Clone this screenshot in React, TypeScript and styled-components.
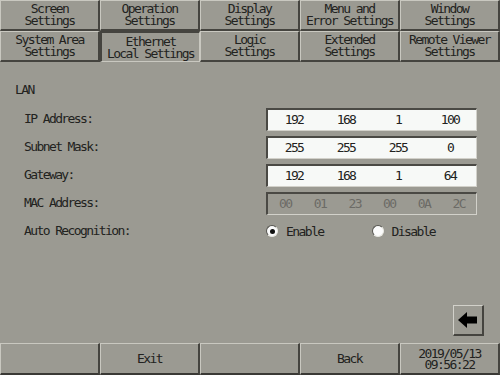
import React from "react";
import { createGlobalStyle, styled } from "styled-components";

const GlobalStyle = createGlobalStyle`
  html, body {
    margin: 0;
    padding: 0;
    background: #9b9a92;
  }
  body {
    font-family: "DejaVu Sans Mono", "Liberation Mono", monospace;
    font-size: 13px;
    letter-spacing: -1.6px;
    color: #222220;
  }
`;

const Screen = styled.div`
  width: 500px;
  height: 375px;
  display: flex;
  flex-direction: column;
  background: #9b9a92;
  overflow: hidden;
`;

const TabGrid = styled.div`
  display: grid;
  grid-template-columns: repeat(5, 100px);
  grid-auto-rows: 31px;
`;

const Tab = styled.div<{ $active?: boolean }>`
  box-sizing: border-box;
  display: flex;
  align-items: center;
  justify-content: center;
  text-align: center;
  line-height: 12px;
  white-space: pre;
  border-style: solid;
  border-width: ${(p) => (p.$active ? "2px 1px 1px 2px" : "1px 2px 2px 1px")};
  border-color: ${(p) =>
    p.$active
      ? "#45443f #c9c8c0 #c9c8c0 #45443f"
      : "#c9c8c0 #45443f #45443f #c9c8c0"};
  padding-top: ${(p) => (p.$active ? "1px" : "0")};
`;

const Content = styled.div`
  flex: 1;
  display: flex;
  flex-direction: column;
  padding: 20px 0 0 15px;
`;

const Section = styled.div`
  height: 16px;
  line-height: 16px;
`;

const Form = styled.div`
  display: grid;
  grid-template-columns: 242px 211px;
  grid-auto-rows: 28px;
  margin-top: 7px;
  padding-left: 9px;
  align-items: center;
`;

const Label = styled.div`
  line-height: 16px;
`;

const Field = styled.div<{ $cols: number; $disabled?: boolean }>`
  box-sizing: border-box;
  height: 23px;
  display: grid;
  grid-template-columns: repeat(${(p) => p.$cols}, 1fr);
  align-items: center;
  background: ${(p) => (p.$disabled ? "#9b9a92" : "#f7f9f7")};
  color: ${(p) => (p.$disabled ? "#6c6b66" : "#222220")};
  border-style: solid;
  border-width: 2px 1px 1px 2px;
  border-color: #4a4944 #d2d1ca #d2d1ca #4a4944;
`;

const Cell = styled.span`
  text-align: center;
`;

const RadioGroup = styled.div`
  display: flex;
  align-items: center;
  padding-left: 0;
`;

const RadioOption = styled.label`
  display: flex;
  align-items: center;
  width: 111px;
  gap: 8px;
`;

const RadioDot = styled.span<{ $checked?: boolean }>`
  box-sizing: border-box;
  width: 12px;
  height: 12px;
  border-radius: 50%;
  background: #fbfbfb;
  border: 1px solid;
  border-color: #55544f #e8e8e2 #e8e8e2 #55544f;
  display: flex;
  align-items: center;
  justify-content: center;
  &::after {
    content: "";
    width: 5px;
    height: 5px;
    border-radius: 50%;
    background: ${(p) => (p.$checked ? "#111" : "transparent")};
  }
`;

const NavRow = styled.div`
  margin-top: auto;
  display: flex;
  justify-content: flex-end;
  padding: 0 16px 7px 0;
`;

const ArrowButton = styled.button`
  box-sizing: border-box;
  width: 31px;
  height: 31px;
  padding: 0;
  background: #9b9a92;
  border-style: solid;
  border-width: 1px 2px 2px 1px;
  border-color: #d2d1ca #45443f #45443f #d2d1ca;
  display: flex;
  align-items: center;
  justify-content: center;
`;

const BottomBar = styled.div`
  display: grid;
  grid-template-columns: repeat(5, 100px);
  height: 32px;
`;

const BarButton = styled.div`
  box-sizing: border-box;
  display: flex;
  align-items: center;
  justify-content: center;
  text-align: center;
  line-height: 11px;
  white-space: pre;
  border-style: solid;
  border-width: 1px 2px 2px 1px;
  border-color: #c9c8c0 #45443f #3a3935 #c9c8c0;
`;

const tabs = [
  "Screen\nSettings",
  "Operation\nSettings",
  "Display\nSettings",
  "Menu and\nError Settings",
  "Window\nSettings",
  "System Area\nSettings",
  "Ethernet\nLocal Settings",
  "Logic\nSettings",
  "Extended\nSettings",
  "Remote Viewer\nSettings",
];

export default function App() {
  return (
    <Screen>
      <GlobalStyle />
      <TabGrid>
        {tabs.map((t, i) => (
          <Tab key={t} $active={i === 6}>
            {t}
          </Tab>
        ))}
      </TabGrid>
      <Content>
        <Section>LAN</Section>
        <Form>
          <Label>IP Address:</Label>
          <Field $cols={4}>
            {["192", "168", "1", "100"].map((v, i) => (
              <Cell key={i}>{v}</Cell>
            ))}
          </Field>
          <Label>Subnet Mask:</Label>
          <Field $cols={4}>
            {["255", "255", "255", "0"].map((v, i) => (
              <Cell key={i}>{v}</Cell>
            ))}
          </Field>
          <Label>Gateway:</Label>
          <Field $cols={4}>
            {["192", "168", "1", "64"].map((v, i) => (
              <Cell key={i}>{v}</Cell>
            ))}
          </Field>
          <Label>MAC Address:</Label>
          <Field $cols={6} $disabled>
            {["00", "01", "23", "00", "0A", "2C"].map((v, i) => (
              <Cell key={i}>{v}</Cell>
            ))}
          </Field>
          <Label>Auto Recognition:</Label>
          <RadioGroup>
            <RadioOption>
              <RadioDot $checked />
              Enable
            </RadioOption>
            <RadioOption>
              <RadioDot />
              Disable
            </RadioOption>
          </RadioGroup>
        </Form>
        <NavRow>
          <ArrowButton aria-label="Back">
            <svg width="20" height="16" viewBox="0 0 20 16">
              <path d="M0 8 L9 0 L9 4.5 L19 4.5 L19 11.5 L9 11.5 L9 16 Z" fill="#000" />
            </svg>
          </ArrowButton>
        </NavRow>
      </Content>
      <BottomBar>
        <BarButton />
        <BarButton>Exit</BarButton>
        <BarButton />
        <BarButton>Back</BarButton>
        <BarButton>{"2019/05/13\n09:56:22"}</BarButton>
      </BottomBar>
    </Screen>
  );
}
